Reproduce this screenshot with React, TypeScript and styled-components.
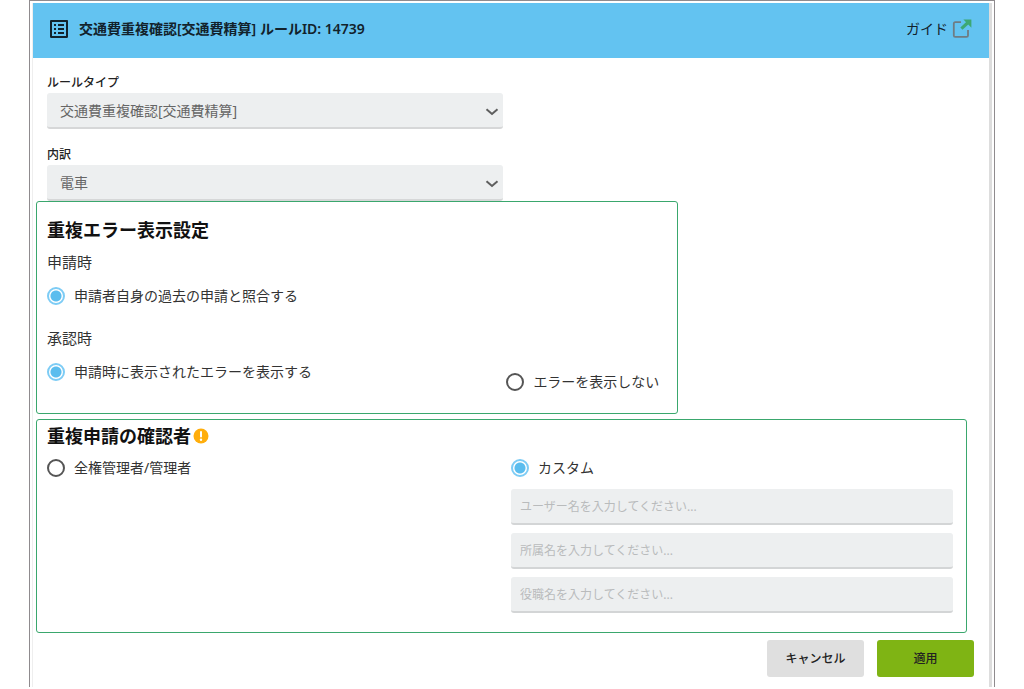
import React, { useState } from 'react';
import styled, { createGlobalStyle } from 'styled-components';

const GlobalStyle = createGlobalStyle`
  *, *::before, *::after { box-sizing: border-box; }
  body {
    margin: 0;
    background: #ffffff;
    color: #333333;
    font-family: "Noto Sans", "Noto Sans CJK JP", sans-serif;
    font-size: 14px;
    line-height: 20px;
  }
  button, input, select { font-family: inherit; }
`;

const Frame = styled.main`
  margin: 0 29px;
  padding: 2px 2px 0;
  border: 1px solid #8f8b8e;
  border-bottom: 0;
`;

const Sheet = styled.form`
  border-left: 1px solid #eeeeee;
  border-right: 3px solid #dddddd;
`;

const Header = styled.header`
  display: flex;
  align-items: center;
  justify-content: space-between;
  padding: 14px 17px 17px 14px;
  background: #63c3f1;
`;

const TitleGroup = styled.div`
  display: flex;
  align-items: center;
  gap: 8px;
  color: #12222c;
`;

const Title = styled.h1`
  margin: 0;
  font-size: 14px;
  line-height: 20px;
  font-weight: 600;
`;

const GuideLink = styled.a`
  display: flex;
  align-items: center;
  gap: 4px;
  color: #12222c;
  text-decoration: none;
`;

const Body = styled.div`
  padding: 15px 22px 0 3px;
`;

const Field = styled.div`
  display: flex;
  flex-direction: column;
  width: 49%;
  margin-left: 11px;

  & + & { margin-top: 16px; }
`;

const FieldLabel = styled.label`
  font-size: 12px;
  line-height: 20px;
  font-weight: 500;
  color: #222222;
`;

const SelectWrap = styled.div`
  position: relative;
`;

const Select = styled.select`
  appearance: none;
  display: block;
  width: 100%;
  height: 36px;
  padding: 0 32px 0 13px;
  border: 0;
  border-bottom: 2px solid #d6d7d8;
  border-radius: 3px;
  background: #edeff0;
  color: #666666;
  font-size: 14px;
  opacity: 1;
`;

const Chevron = styled.svg`
  position: absolute;
  right: 4px;
  top: 11px;
  pointer-events: none;
`;

const Panel = styled.section<{ $compact?: boolean }>`
  width: ${(p) => (p.$compact ? '69%' : '100%')};
  margin-top: ${(p) => (p.$compact ? '0' : '5px')};
  padding: ${(p) => (p.$compact ? '16px 18px 21px 10px' : '4px 13px 19px 10px')};
  border: 1px solid #3aa76d;
  border-radius: 3px;
  background: #ffffff;
`;

const PanelHeading = styled.h2`
  display: flex;
  align-items: center;
  gap: 2px;
  margin: 0;
  font-size: 18px;
  line-height: 24px;
  font-weight: 700;
  color: #111111;
`;

const Group = styled.fieldset`
  margin: 8px 0 0;
  padding: 0;
  border: 0;
  min-width: 0;

  & + & { margin-top: 20px; }
`;

const GroupTitle = styled.legend`
  padding: 0;
  font-size: 15px;
  line-height: 24px;
`;

const OptionRow = styled.div`
  display: flex;
  align-items: flex-start;
  justify-content: space-between;
  margin-top: 12px;
`;

const Option = styled.label<{ $lowered?: boolean }>`
  display: flex;
  align-items: center;
  gap: 9px;
  margin-top: ${(p) => (p.$lowered ? '10px' : '0')};
  line-height: 20px;
`;

const Radio = styled.input`
  appearance: none;
  flex: none;
  width: 18px;
  height: 18px;
  margin: 0;
  border: 2px solid #555555;
  border-radius: 50%;
  background: #ffffff;

  &:checked {
    border-color: #7dccf5;
    background: radial-gradient(circle, #5bbdee 0 5px, #ffffff 6px);
  }
`;

const Columns = styled.div`
  display: grid;
  grid-template-columns: 1fr 1fr;
  gap: 22px;
  align-items: start;
  margin-top: 10px;
`;

const Inputs = styled.div`
  display: flex;
  flex-direction: column;
  gap: 8px;
  margin-top: 11px;
`;

const TextInput = styled.input`
  width: 100%;
  height: 36px;
  padding: 0 9px;
  border: 0;
  border-bottom: 2px solid #d3d5d6;
  border-radius: 3px;
  background: #edeff0;
  color: #333333;
  font-size: 12px;

  &::placeholder { color: #b9bbbc; opacity: 1; }
`;

const Footer = styled.footer`
  display: flex;
  justify-content: flex-end;
  gap: 13px;
  padding: 7px 15px 10px;
`;

const Button = styled.button<{ $primary?: boolean }>`
  width: 97px;
  height: 37px;
  padding: 0 0 2px;
  border: 0;
  border-radius: 3px;
  background: ${(p) => (p.$primary ? '#7fb414' : '#dfdfdf')};
  color: #222222;
  font-size: 12px;
  font-weight: 500;
`;

const ListIcon = () => (
  <svg width="24" height="24" viewBox="0 0 24 24" fill="currentColor" aria-hidden="true">
    <path d="M19 5v14H5V5h14m1.1-2H3.9c-.5 0-.9.4-.9.9v16.2c0 .4.4.9.9.9h16.2c.4 0 .9-.5.9-.9V3.9c0-.5-.5-.9-.9-.9zM11 7h6v2h-6V7zm0 4h6v2h-6v-2zm0 4h6v2h-6v-2zM7 7h2v2H7V7zm0 4h2v2H7v-2zm0 4h2v2H7v-2z" />
  </svg>
);

const ExternalIcon = () => (
  <svg width="20" height="20" viewBox="0 0 20 20" fill="none" aria-hidden="true">
    <path d="M9 3.2H3.2Q1.8 3.2 1.8 4.6V16.4Q1.8 17.8 3.2 17.8H14.6Q16 17.8 16 16.4V11" stroke="#6f7c83" strokeWidth="1.8" />
    <path d="M9.4 9.6L15.8 3.8" stroke="#3da873" strokeWidth="3.2" />
    <path d="M11.4 .6H19.4V8.8Z" fill="#3da873" />
  </svg>
);

const WarningIcon = () => (
  <svg width="16" height="16" viewBox="0 0 16 16" role="img" aria-label="注意">
    <circle cx="8" cy="8" r="7.5" fill="#ffae0c" />
    <path d="M8 4V8.6" stroke="#fff" strokeWidth="2" strokeLinecap="round" />
    <circle cx="8" cy="11.8" r="1.2" fill="#fff" />
  </svg>
);

interface SelectFieldProps {
  id: string;
  label: string;
  value: string;
}

const SelectField = ({ id, label, value }: SelectFieldProps) => (
  <Field>
    <FieldLabel htmlFor={id}>{label}</FieldLabel>
    <SelectWrap>
      <Select id={id} disabled defaultValue={value}>
        <option value={value}>{value}</option>
      </Select>
      <Chevron width="14" height="14" viewBox="0 0 14 14" fill="none" aria-hidden="true">
        <path d="M1.5 5.2L7 10L12.5 5.2" stroke="#5e5e5e" strokeWidth="2" />
      </Chevron>
    </SelectWrap>
  </Field>
);

const PLACEHOLDERS = [
  'ユーザー名を入力してください...',
  '所属名を入力してください...',
  '役職名を入力してください...',
];

export default function App() {
  const [approval, setApproval] = useState('show');
  const [reviewer, setReviewer] = useState('custom');

  return (
    <>
      <GlobalStyle />
      <Frame>
        <Sheet onSubmit={(e) => e.preventDefault()}>
          <Header>
            <TitleGroup>
              <ListIcon />
              <Title>交通費重複確認[交通費精算] ルールID: 14739</Title>
            </TitleGroup>
            <GuideLink href="#guide">
              ガイド
              <ExternalIcon />
            </GuideLink>
          </Header>
          <Body>
            <SelectField id="rule-type" label="ルールタイプ" value="交通費重複確認[交通費精算]" />
            <SelectField id="breakdown" label="内訳" value="電車" />
            <Panel $compact>
              <PanelHeading>重複エラー表示設定</PanelHeading>
              <Group>
                <GroupTitle>申請時</GroupTitle>
                <OptionRow>
                  <Option>
                    <Radio type="radio" name="apply" defaultChecked />
                    申請者自身の過去の申請と照合する
                  </Option>
                </OptionRow>
              </Group>
              <Group>
                <GroupTitle>承認時</GroupTitle>
                <OptionRow>
                  <Option>
                    <Radio type="radio" name="approval" checked={approval === 'show'} onChange={() => setApproval('show')} />
                    申請時に表示されたエラーを表示する
                  </Option>
                  <Option $lowered>
                    <Radio type="radio" name="approval" checked={approval === 'hide'} onChange={() => setApproval('hide')} />
                    エラーを表示しない
                  </Option>
                </OptionRow>
              </Group>
            </Panel>
            <Panel>
              <PanelHeading>
                重複申請の確認者
                <WarningIcon />
              </PanelHeading>
              <Columns>
                <Option>
                  <Radio type="radio" name="reviewer" checked={reviewer === 'admin'} onChange={() => setReviewer('admin')} />
                  全権管理者/管理者
                </Option>
                <div>
                  <Option>
                    <Radio type="radio" name="reviewer" checked={reviewer === 'custom'} onChange={() => setReviewer('custom')} />
                    カスタム
                  </Option>
                  <Inputs>
                    {PLACEHOLDERS.map((text) => (
                      <TextInput key={text} type="text" placeholder={text} aria-label={text} />
                    ))}
                  </Inputs>
                </div>
              </Columns>
            </Panel>
          </Body>
          <Footer>
            <Button type="button">キャンセル</Button>
            <Button type="submit" $primary>適用</Button>
          </Footer>
        </Sheet>
      </Frame>
    </>
  );
}
